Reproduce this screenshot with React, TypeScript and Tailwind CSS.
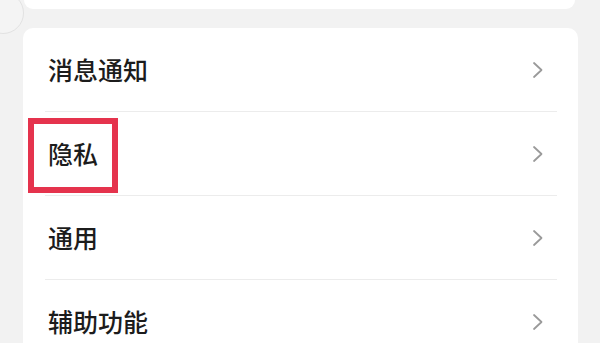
const rows = ["消息通知", "隐私", "通用", "辅助功能"]

function Chevron() {
  return (
    <svg width="12" height="18" viewBox="0 0 12 18" fill="none">
      <path d="M2 2 L9.5 9 L2 16" stroke="#9a9a9a" strokeWidth="1.8" strokeLinecap="round" strokeLinejoin="round" />
    </svg>
  )
}

export default function App() {
  return (
    <div
      className="relative w-[600px] h-[343px] overflow-hidden bg-[#f2f2f2]"
      style={{ fontFamily: '"Noto Sans CJK SC", "Noto Sans", sans-serif' }}
    >
      {/* faint round button, top left */}
      <div className="absolute -left-[18px] -top-[8px] w-[42px] h-[42px] rounded-full border border-[#e2e2e2] bg-[#f4f4f4]" />

      {/* previous card, mostly scrolled off */}
      <div className="relative ml-[24px] mr-[25px] h-[9px] rounded-b-[10px] bg-white" />

      {/* settings list */}
      <div className="mt-[19px] ml-[23px] mr-[22px] rounded-[10px] bg-white">
        {rows.map((label, i) => (
          <div key={label}>
            {i > 0 && <div className="ml-[22px] mr-[21px] h-px bg-[#ececec]" />}
            <div className="flex h-[83px] items-center justify-between pl-[25px] pr-[34px]">
              <span className="text-[25px] font-medium text-[#1c1c1c] leading-none">{label}</span>
              <Chevron />
            </div>
          </div>
        ))}
      </div>

      {/* highlight box */}
      <div className="absolute left-[28px] top-[118px] w-[90px] h-[75px] border-[6px] border-[#e5334d]" />
    </div>
  )
}
